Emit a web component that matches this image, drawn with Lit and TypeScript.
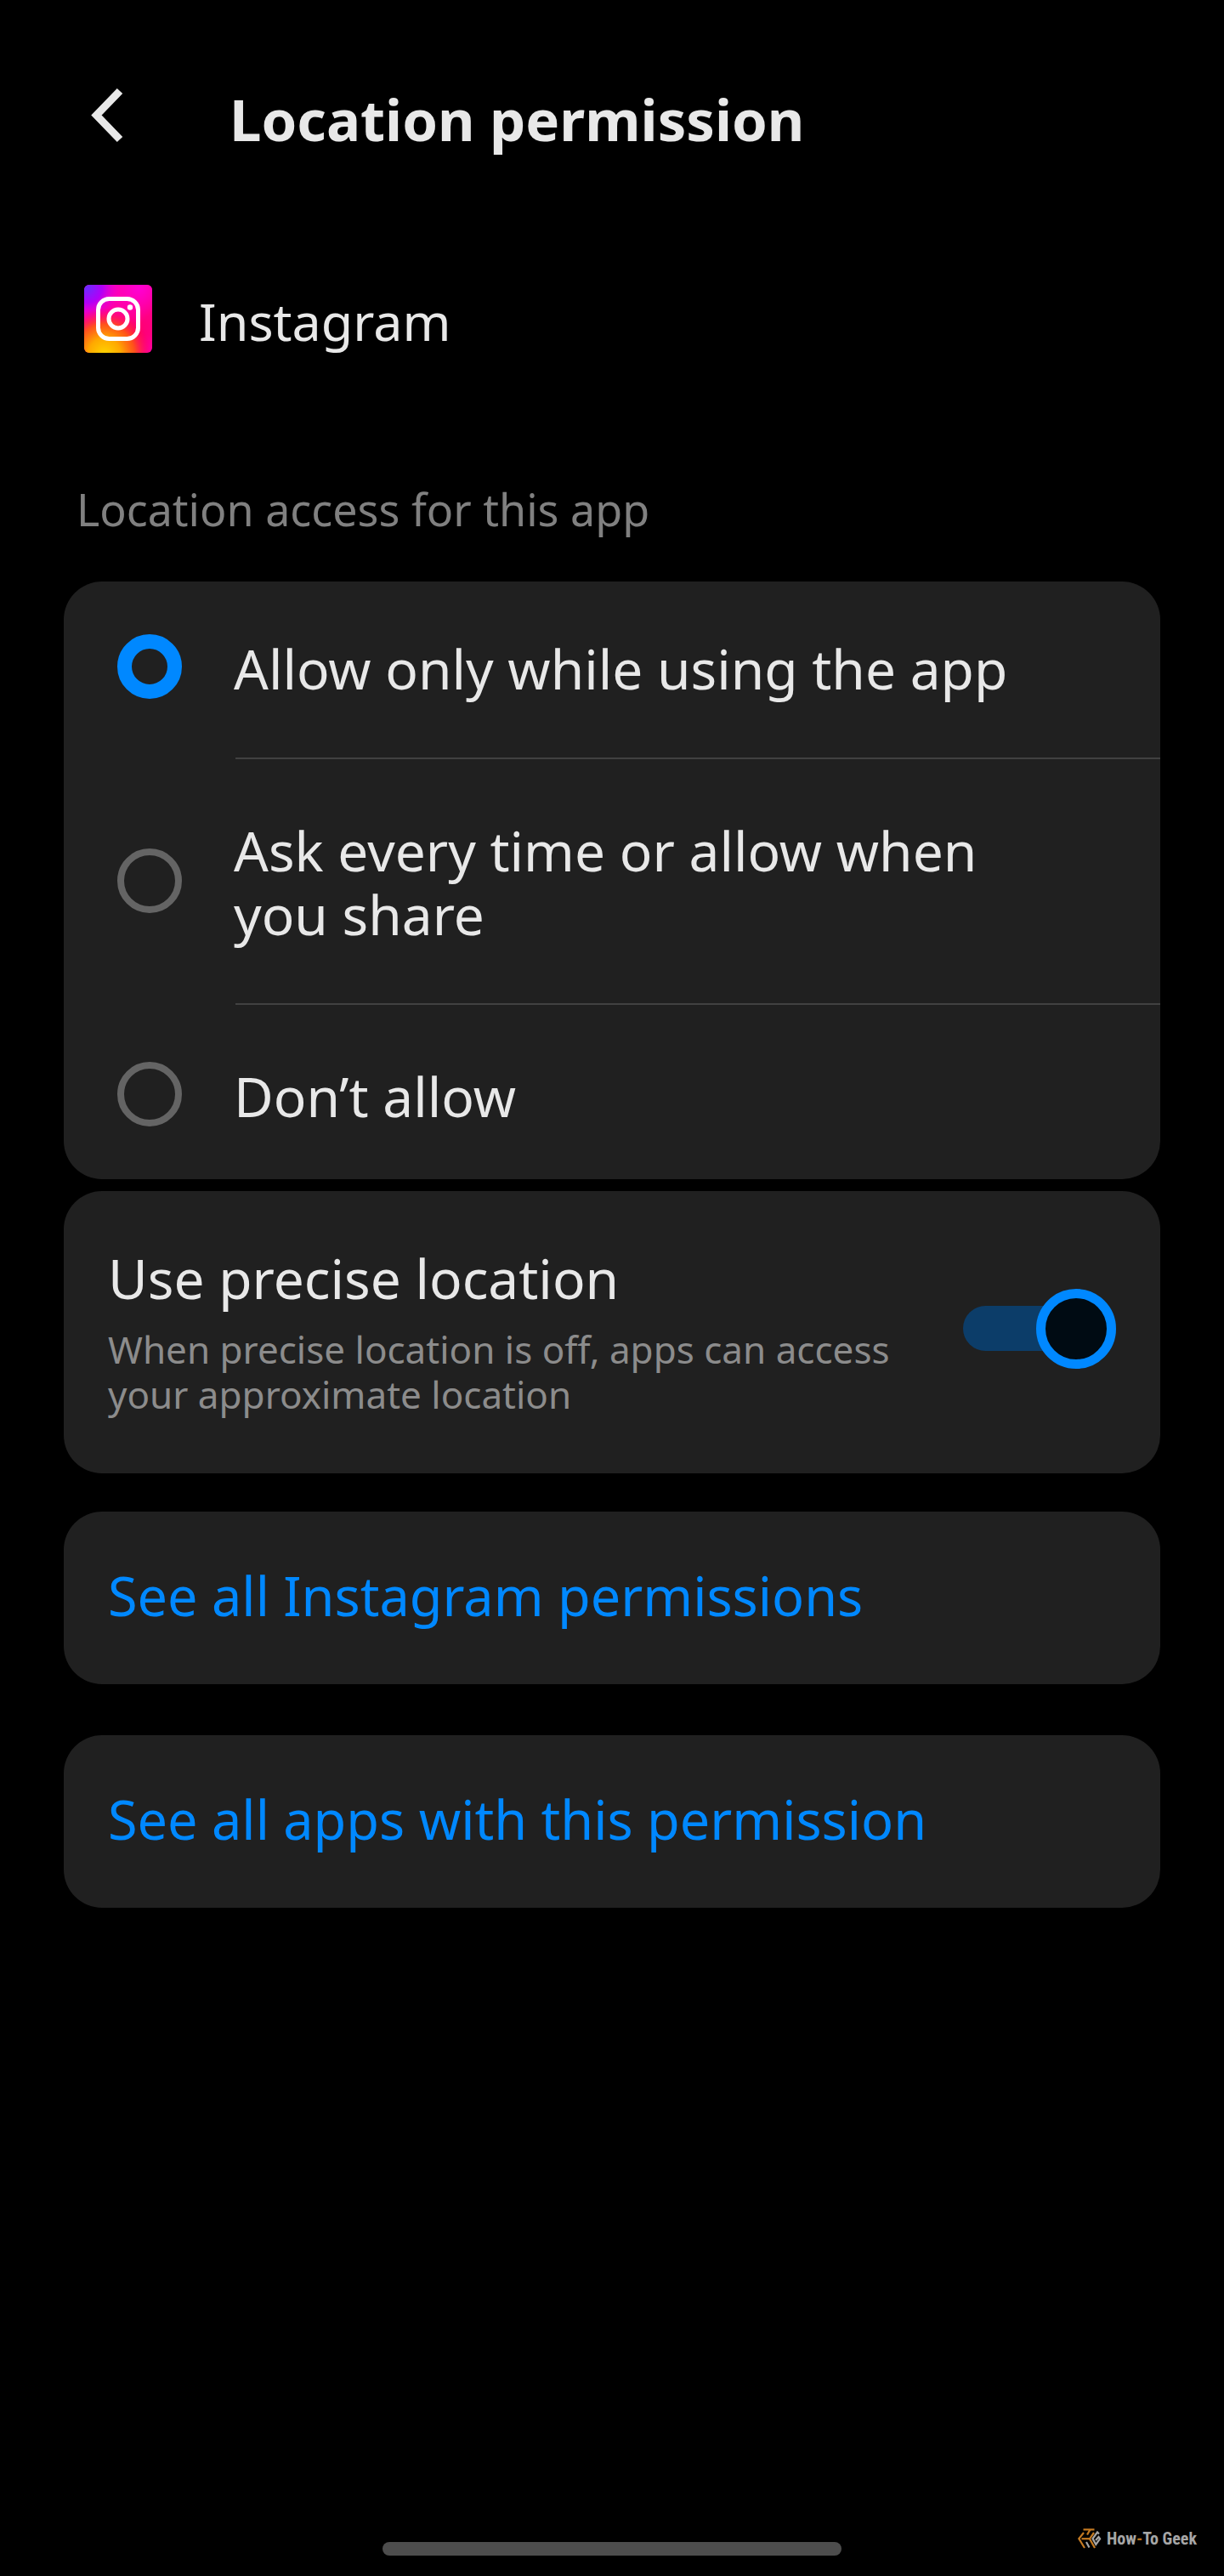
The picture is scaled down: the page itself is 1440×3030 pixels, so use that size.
import { LitElement, html, css, svg } from "lit";
import { customElement, state } from "lit/decorators.js";

interface AccessOption {
  id: string;
  label: string;
}

const OPTIONS: AccessOption[] = [
  { id: "while-using", label: "Allow only while using the app" },
  { id: "ask", label: "Ask every time or allow when you share" },
  { id: "deny", label: "Don’t allow" },
];

const LINKS = ["See all Instagram permissions", "See all apps with this permission"];

const backIcon = svg`
  <svg class="back-icon" viewBox="0 0 60 96" fill="none" aria-hidden="true">
    <path d="M56 15 28.5 43.5 56 72" stroke="#e8e8e8" stroke-width="9" />
  </svg>`;

const instagramIcon = svg`
  <svg class="app-icon" viewBox="0 0 80 80" aria-hidden="true">
    <defs>
      <linearGradient id="base" x1="0" y1="0" x2="1" y2="1">
        <stop offset="0" stop-color="#ff00c8" />
        <stop offset="0.45" stop-color="#ff0090" />
        <stop offset="0.7" stop-color="#ff0060" />
        <stop offset="1" stop-color="#ff00a0" />
      </linearGradient>
      <radialGradient id="violet" cx="0.04" cy="0.04" r="0.5">
        <stop offset="0" stop-color="#6a2cff" />
        <stop offset="0.45" stop-color="#a800ff" stop-opacity="0.9" />
        <stop offset="1" stop-color="#f000e0" stop-opacity="0" />
      </radialGradient>
      <radialGradient id="magenta" cx="0.8" cy="0.05" r="0.7">
        <stop offset="0" stop-color="#ff00d4" />
        <stop offset="1" stop-color="#ff00b0" stop-opacity="0" />
      </radialGradient>
      <radialGradient id="amber" cx="0.3" cy="1.02" r="0.68">
        <stop offset="0" stop-color="#ffd400" />
        <stop offset="0.35" stop-color="#ffa800" />
        <stop offset="0.65" stop-color="#ff5a10" stop-opacity="0.9" />
        <stop offset="1" stop-color="#ff0050" stop-opacity="0" />
      </radialGradient>
    </defs>
    <rect width="80" height="80" rx="6" fill="url(#base)" />
    <rect width="80" height="80" rx="6" fill="url(#magenta)" />
    <rect width="80" height="80" rx="6" fill="url(#violet)" />
    <rect width="80" height="80" rx="6" fill="url(#amber)" />
    <g fill="none" stroke="#fff" stroke-width="5">
      <rect x="16.5" y="16.5" width="47" height="47" rx="13" />
      <circle cx="40" cy="40" r="11" />
    </g>
    <circle cx="54" cy="26.5" r="3.2" fill="#fff" />
  </svg>`;

const brandIcon = svg`
  <svg class="brand-icon" viewBox="0 0 28 24" fill="none" stroke-width="2.2" aria-hidden="true">
    <g stroke="#c47a22">
      <path d="M7 1.4H20" />
      <path d="M15 1.4 11.5 7.5" />
      <path d="M7.5 5 1.8 12 8.5 23" />
      <path d="M19.5 5 14.5 12.2 20.5 23" />
      <path d="M5 12.2H14.5" />
    </g>
    <g stroke="#a6a6a6">
      <path d="M25.5 6.5 23.5 4.5 18 12 21.8 19 26.6 12.2 25 10 21.5 14" />
      <path d="M10.5 16 14 22.5" />
    </g>
  </svg>`;

@customElement("app-root")
export class AppRoot extends LitElement {
  @state() private access = "while-using";
  @state() private precise = true;

  static styles = css`
    :host {
      display: block;
      background: #000;
      color: #e8e8e8;
      font-family: "Noto Sans", sans-serif;
    }
    * {
      box-sizing: border-box;
    }
    .screen {
      display: flex;
      flex-direction: column;
      min-height: 100vh;
      padding: 92px 75px 0;
    }
    .header {
      display: flex;
      align-items: center;
      gap: 110px;
      padding-left: 10px;
    }
    .back {
      flex: none;
      width: 75px;
      height: 96px;
      padding: 0;
      border: 0;
      background: none;
      cursor: pointer;
    }
    .back-icon {
      display: block;
      width: 60px;
      height: 96px;
    }
    .title {
      margin: 0;
      font-size: 67px;
      line-height: 96px;
      font-weight: 700;
    }
    .app {
      display: flex;
      align-items: center;
      gap: 55px;
      margin-top: 147px;
      padding-left: 24px;
    }
    .app-icon {
      flex: none;
      width: 80px;
      height: 80px;
    }
    .app-name {
      padding-top: 5px;
      font-size: 61px;
      line-height: 75px;
    }
    .section-title {
      margin: 149px 0 50px;
      padding-left: 15px;
      color: #808080;
      font-size: 52px;
      line-height: 70px;
      font-weight: 400;
    }
    .card {
      border-radius: 45px;
      background: #202020;
    }
    .options {
      margin: 0;
      padding: 0;
      border: 0;
    }
    .option {
      display: flex;
      align-items: center;
      gap: 61px;
      padding: 65px 120px 67px 63px;
      cursor: pointer;
    }
    .option:first-of-type {
      padding-top: 60px;
    }
    .option:last-of-type {
      padding-bottom: 60px;
    }
    .option-label {
      padding-top: 5px;
      font-size: 64px;
      line-height: 75px;
    }
    .divider {
      height: 2px;
      margin: 0 0 0 202px;
      border: 0;
      background: #414141;
    }
    .radio {
      appearance: none;
      flex: none;
      width: 76px;
      height: 76px;
      margin: 0;
      border: 8px solid #646464;
      border-radius: 50%;
      cursor: pointer;
    }
    .radio:checked {
      border: 17px solid #0088ff;
    }
    .precise {
      display: flex;
      align-items: center;
      justify-content: space-between;
      gap: 60px;
      margin-top: 14px;
      padding: 58px 52px 66px;
      cursor: pointer;
    }
    .precise-text {
      display: flex;
      flex-direction: column;
      gap: 17px;
      padding-top: 5px;
    }
    .precise-title {
      font-size: 64px;
      line-height: 80px;
    }
    .precise-note {
      color: #8c8c8c;
      font-size: 44px;
      line-height: 53px;
    }
    .switch {
      appearance: none;
      position: relative;
      flex: none;
      width: 180px;
      height: 94px;
      margin: 0;
      cursor: pointer;
    }
    .switch::before {
      content: "";
      position: absolute;
      inset: 20px 10px 21px 0;
      border-radius: 27px;
      background: #454545;
    }
    .switch::after {
      content: "";
      position: absolute;
      top: 0;
      left: 0;
      width: 94px;
      height: 94px;
      box-sizing: border-box;
      border: 11px solid #8c8c8c;
      border-radius: 50%;
      background: #000b13;
    }
    .switch:checked::before {
      background: #0c3d69;
    }
    .switch:checked::after {
      left: auto;
      right: 0;
      border-color: #0088ff;
    }
    .links {
      display: flex;
      flex-direction: column;
      gap: 60px;
      margin-top: 45px;
    }
    .link {
      display: block;
      padding: 59px 52px 64px;
      color: #0088ff;
      font-size: 63px;
      line-height: 80px;
      text-decoration: none;
    }
    .footer {
      display: grid;
      grid-template-columns: 1fr 540px 1fr;
      margin: auto -75px 0;
      padding: 0 32px 24px;
    }
    .home-bar {
      grid-column: 2;
      align-self: end;
      height: 16px;
      border-radius: 8px;
      background: #4d4d4d;
    }
    .brand {
      display: flex;
      align-items: center;
      justify-content: flex-end;
      gap: 6px;
      height: 32px;
      padding-bottom: 8px;
      color: #a6a6a6;
      font-family: "Roboto Condensed", Roboto, sans-serif;
      font-size: 20px;
      line-height: 24px;
      font-weight: 700;
      white-space: nowrap;
    }
    .brand-icon {
      flex: none;
      width: 29px;
      height: 24px;
    }
    .brand-dash {
      color: #b8701f;
    }
  `;

  render() {
    return html`
      <main class="screen">
        <header class="header">
          <button class="back" type="button" aria-label="Back">${backIcon}</button>
          <h1 class="title">Location permission</h1>
        </header>

        <div class="app">
          ${instagramIcon}
          <span class="app-name">Instagram</span>
        </div>

        <h2 class="section-title" id="access-title">Location access for this app</h2>

        <fieldset class="card options" aria-labelledby="access-title">
          ${OPTIONS.map(
            (option, index) => html`
              ${index > 0 ? html`<hr class="divider" />` : null}
              <label class="option" for=${option.id}>
                <input
                  class="radio"
                  type="radio"
                  name="access"
                  id=${option.id}
                  .checked=${this.access === option.id}
                  @change=${() => (this.access = option.id)}
                />
                <span class="option-label">${option.label}</span>
              </label>
            `,
          )}
        </fieldset>

        <label class="card precise" for="precise">
          <span class="precise-text">
            <span class="precise-title">Use precise location</span>
            <span class="precise-note"
              >When precise location is off, apps can access your approximate location</span
            >
          </span>
          <input
            class="switch"
            type="checkbox"
            role="switch"
            id="precise"
            .checked=${this.precise}
            @change=${() => (this.precise = !this.precise)}
          />
        </label>

        <nav class="links">
          ${LINKS.map((text) => html`<a class="card link" href="#">${text}</a>`)}
        </nav>

        <footer class="footer">
          <div class="home-bar"></div>
          <div class="brand">
            ${brandIcon}
            <span>How<span class="brand-dash">-</span>To Geek</span>
          </div>
        </footer>
      </main>
    `;
  }
}
